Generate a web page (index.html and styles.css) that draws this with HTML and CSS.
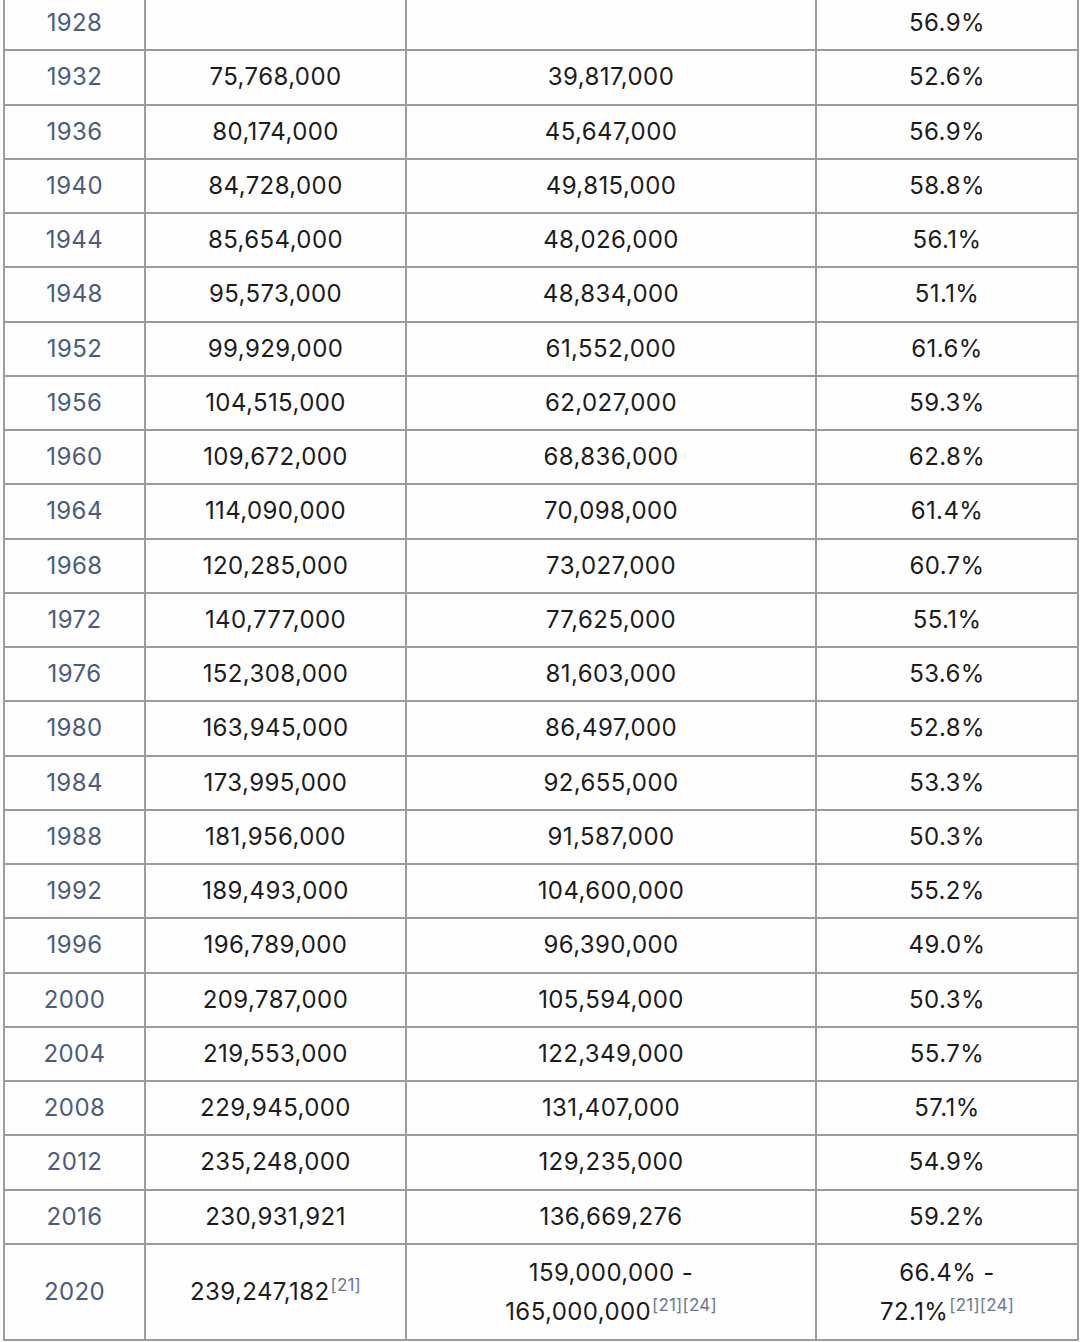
FILE: index.html
```html
<!DOCTYPE html>
<html>
<head>
<meta charset="utf-8">
<link rel="stylesheet" href="styles.css">
</head>
<body>
<table class="turnout">
  <colgroup>
    <col class="c-year"><col class="c-pop"><col class="c-votes"><col class="c-pct">
  </colgroup>
  <tbody>
    <tr><td class="year">1928</td><td></td><td></td><td>56.9%</td></tr>
    <tr><td class="year">1932</td><td>75,768,000</td><td>39,817,000</td><td>52.6%</td></tr>
    <tr><td class="year">1936</td><td>80,174,000</td><td>45,647,000</td><td>56.9%</td></tr>
    <tr><td class="year">1940</td><td>84,728,000</td><td>49,815,000</td><td>58.8%</td></tr>
    <tr><td class="year">1944</td><td>85,654,000</td><td>48,026,000</td><td>56.1%</td></tr>
    <tr><td class="year">1948</td><td>95,573,000</td><td>48,834,000</td><td>51.1%</td></tr>
    <tr><td class="year">1952</td><td>99,929,000</td><td>61,552,000</td><td>61.6%</td></tr>
    <tr><td class="year">1956</td><td>104,515,000</td><td>62,027,000</td><td>59.3%</td></tr>
    <tr><td class="year">1960</td><td>109,672,000</td><td>68,836,000</td><td>62.8%</td></tr>
    <tr><td class="year">1964</td><td>114,090,000</td><td>70,098,000</td><td>61.4%</td></tr>
    <tr><td class="year">1968</td><td>120,285,000</td><td>73,027,000</td><td>60.7%</td></tr>
    <tr><td class="year">1972</td><td>140,777,000</td><td>77,625,000</td><td>55.1%</td></tr>
    <tr><td class="year">1976</td><td>152,308,000</td><td>81,603,000</td><td>53.6%</td></tr>
    <tr><td class="year">1980</td><td>163,945,000</td><td>86,497,000</td><td>52.8%</td></tr>
    <tr><td class="year">1984</td><td>173,995,000</td><td>92,655,000</td><td>53.3%</td></tr>
    <tr><td class="year">1988</td><td>181,956,000</td><td>91,587,000</td><td>50.3%</td></tr>
    <tr><td class="year">1992</td><td>189,493,000</td><td>104,600,000</td><td>55.2%</td></tr>
    <tr><td class="year">1996</td><td>196,789,000</td><td>96,390,000</td><td>49.0%</td></tr>
    <tr><td class="year">2000</td><td>209,787,000</td><td>105,594,000</td><td>50.3%</td></tr>
    <tr><td class="year">2004</td><td>219,553,000</td><td>122,349,000</td><td>55.7%</td></tr>
    <tr><td class="year">2008</td><td>229,945,000</td><td>131,407,000</td><td>57.1%</td></tr>
    <tr><td class="year">2012</td><td>235,248,000</td><td>129,235,000</td><td>54.9%</td></tr>
    <tr><td class="year">2016</td><td>230,931,921</td><td>136,669,276</td><td>59.2%</td></tr>
    <tr class="tall">
      <td class="year">2020</td>
      <td>239,247,182<sup class="ref">[21]</sup></td>
      <td>159,000,000 -<br>165,000,000<sup class="ref">[21][24]</sup></td>
      <td>66.4% -<br>72.1%<sup class="ref">[21][24]</sup></td>
    </tr>
  </tbody>
</table>
</body>
</html>
```

FILE: styles.css
```css
html, body {
  margin: 0;
  padding: 0;
  background: #fefefe;
}

body {
  font-family: Inter, "Liberation Sans", Arial, sans-serif;
  color: #1c1c1c;
}

.turnout {
  border-collapse: collapse;
  table-layout: fixed;
  width: 1074px;
  margin: -5px 0 0 3px;
  font-size: 24px;
  letter-spacing: 0.4px;
}

.c-year { width: 141px; }
.c-pop { width: 261px; }
.c-votes { width: 410px; }
.c-pct { width: 262px; }

.turnout td {
  border: 2px solid #9c9c9c;
  height: 52.25px;
  padding: 0;
  text-align: center;
  vertical-align: middle;
  line-height: 28px;
}

.turnout td.year {
  color: #4b5c7c;
}

.turnout tr.tall td {
  height: 94px;
  line-height: 39px;
}

.ref {
  font-size: 17px;
  letter-spacing: 0.2px;
  color: #6a7890;
  vertical-align: 9px;
  line-height: 0;
  margin-left: 1px;
}
```
